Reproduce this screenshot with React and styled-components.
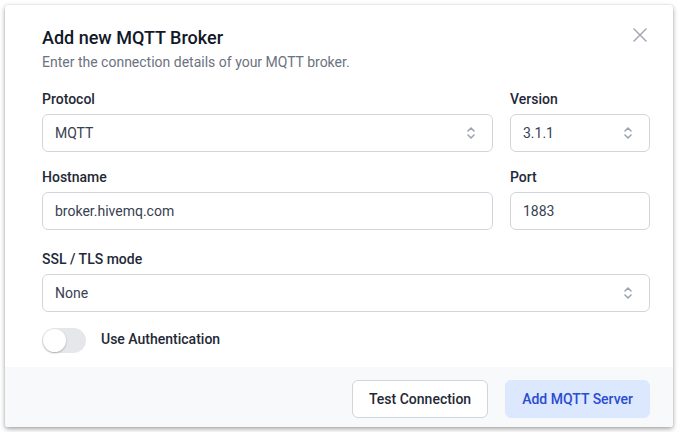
import styled, { createGlobalStyle } from "styled-components";

const GlobalStyle = createGlobalStyle`
  html, body {
    margin: 0;
    background: #ffffff;
  }
  body {
    padding: 5px;
    font-family: Roboto, "Liberation Sans", sans-serif;
  }
  * { box-sizing: border-box; }
`;

// 모달 카드
const Card = styled.div`
  position: relative;
  width: 668px;
  height: 422px;
  background: #fff;
  border-radius: 3px;
  box-shadow: 0 2px 5px rgba(0, 0, 0, 0.35), 0 0 2px rgba(0, 0, 0, 0.12);
  display: flex;
  flex-direction: column;
  overflow: hidden;
`;

const Body = styled.div`
  flex: 1;
  padding: 20px 23px 0 37px;
`;

const Title = styled.h2`
  margin: 0;
  font-size: 18px;
  line-height: 26px;
  font-weight: 500;
  color: #111827;
`;

const Subtitle = styled.p`
  margin: 1px 0 0;
  font-size: 14px;
  line-height: 20px;
  color: #6b7280;
`;

const CloseButton = styled.button`
  position: absolute;
  top: 16px;
  right: 19px;
  width: 28px;
  height: 28px;
  padding: 0;
  border: none;
  background: none;
  display: flex;
  align-items: center;
  justify-content: center;
  color: #9ca3af;
`;

const Row = styled.div`
  display: grid;
  grid-template-columns: ${(p) => p.cols || "1fr"};
  column-gap: 17px;
  margin-top: ${(p) => p.top}px;
`;

const Field = styled.div`
  display: flex;
  flex-direction: column;
`;

const Label = styled.label`
  font-size: 14px;
  line-height: 20px;
  font-weight: 500;
  color: #1f2937;
  margin-bottom: 5px;
`;

const InputBox = styled.div`
  height: 38px;
  border: 1px solid #d1d5db;
  border-radius: 6px;
  background: #fff;
  display: flex;
  align-items: center;
  justify-content: space-between;
  padding: 0 16px 0 12px;
  font-size: 14px;
  color: #374151;
`;

const ToggleRow = styled.div`
  display: flex;
  align-items: center;
  gap: 15px;
  margin-top: 16px;
`;

const Track = styled.div`
  width: 44px;
  height: 25px;
  border-radius: 13px;
  background: #e5e7eb;
  position: relative;
`;

const Knob = styled.span`
  position: absolute;
  top: 1px;
  left: 1px;
  width: 23px;
  height: 23px;
  border-radius: 50%;
  background: #fff;
  box-shadow: 0 1px 2px rgba(0, 0, 0, 0.25);
`;

const ToggleLabel = styled.span`
  font-size: 14px;
  font-weight: 500;
  color: #1f2937;
  margin-top: -3px;
`;

const Footer = styled.div`
  height: 60px;
  background: #f8f9fb;
  display: flex;
  justify-content: flex-end;
  align-items: center;
  gap: 17px;
  padding: 3px 23px 0 0;
`;

const Button = styled.button`
  height: 38px;
  padding: 0 16px;
  border-radius: 6px;
  font-family: inherit;
  font-size: 14px;
  font-weight: 500;
  border: 1px solid ${(p) => (p.primary ? "#dbe8fd" : "#d1d5db")};
  background: ${(p) => (p.primary ? "#dbe8fd" : "#fff")};
  color: ${(p) => (p.primary ? "#2b4bd1" : "#1f2937")};
`;

const Chevrons = () => (
  <svg width="10" height="14" viewBox="0 0 10 14" fill="none" stroke="#9ca3af" strokeWidth="1.6" strokeLinecap="round" strokeLinejoin="round">
    <path d="M2 5l3-3 3 3" />
    <path d="M2 9l3 3 3-3" />
  </svg>
);

const Select = ({ value }) => (
  <InputBox>
    <span>{value}</span>
    <Chevrons />
  </InputBox>
);

export default function App() {
  return (
    <>
      <GlobalStyle />
      <Card>
        <CloseButton aria-label="close">
          <svg width="16" height="16" viewBox="0 0 16 16" stroke="currentColor" strokeWidth="1.4" strokeLinecap="round">
            <path d="M2 2l12 12M14 2L2 14" />
          </svg>
        </CloseButton>
        <Body>
          <Title>Add new MQTT Broker</Title>
          <Subtitle>Enter the connection details of your MQTT broker.</Subtitle>

          <Row cols="1fr 140px" top={17}>
            <Field>
              <Label>Protocol</Label>
              <Select value="MQTT" />
            </Field>
            <Field>
              <Label>Version</Label>
              <Select value="3.1.1" />
            </Field>
          </Row>

          <Row cols="1fr 140px" top={15}>
            <Field>
              <Label>Hostname</Label>
              <InputBox>broker.hivemq.com</InputBox>
            </Field>
            <Field>
              <Label>Port</Label>
              <InputBox>1883</InputBox>
            </Field>
          </Row>

          <Row top={19}>
            <Field>
              <Label>SSL / TLS mode</Label>
              <Select value="None" />
            </Field>
          </Row>

          <ToggleRow>
            <Track>
              <Knob />
            </Track>
            <ToggleLabel>Use Authentication</ToggleLabel>
          </ToggleRow>
        </Body>
        <Footer>
          <Button>Test Connection</Button>
          <Button primary>Add MQTT Server</Button>
        </Footer>
      </Card>
    </>
  );
}
